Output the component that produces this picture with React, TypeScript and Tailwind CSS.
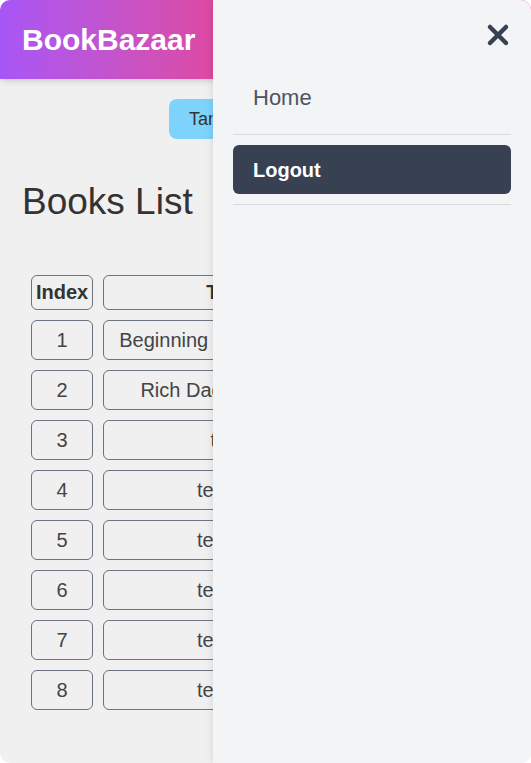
import { useState } from 'react';

interface Book {
  id: number;
  title: string;
}

const books: Book[] = [
  { id: 1, title: 'Beginning Programming' },
  { id: 2, title: 'Rich Dad Poor Dad' },
  { id: 3, title: 'test' },
  { id: 4, title: 'testing' },
  { id: 5, title: 'testing' },
  { id: 6, title: 'testing' },
  { id: 7, title: 'testing' },
  { id: 8, title: 'testing' },
];

function CloseIcon() {
  return (
    <svg width="24" height="24" viewBox="0 0 24 24" fill="none" className="text-[#374151]">
      <path d="M4 4L20 20M20 4L4 20" stroke="currentColor" strokeWidth="4.5" strokeLinecap="round" />
    </svg>
  );
}

export default function App() {
  const [open, setOpen] = useState(true);

  return (
    <div className="h-[763px] w-[531px] bg-white font-['Liberation_Sans',Arial,sans-serif]">
      <div className="relative h-full w-full overflow-hidden rounded-[10px] bg-[#f0f0f0]">
        <header className="flex h-[79px] items-center bg-linear-to-r from-[#a855f7] to-[#e0479f] to-[42%] px-[22px] shadow-md">
          <h1 className="text-[30px] font-bold text-white">BookBazaar</h1>
        </header>

        <main className="px-[22px]">
          <div className="flex justify-center pt-[20px]">
            <button
              type="button"
              className="h-[40px] rounded-lg bg-[#7dd3fc] px-5 text-[18px] text-[#333]"
            >
              Tambah Buku Baru
            </button>
          </div>

          <h2 className="mt-[41px] text-[37px] leading-[43px] text-[#333]">Books List</h2>

          <table className="mt-[42px] -ml-[1px] border-separate border-spacing-[10px] text-[20px] leading-[24px] text-[#444]">
            <thead>
              <tr>
                <th className="rounded-md border border-[#6b7280] px-1 py-[5px] leading-[23px] font-bold text-[#333]">Index</th>
                <th className="rounded-md border border-[#6b7280] px-[15px] py-[5px] leading-[23px] font-bold text-[#333]">Title</th>
                <th className="rounded-md border border-[#6b7280] px-[15px] py-[5px] leading-[23px] font-bold text-[#333]">Action</th>
              </tr>
            </thead>
            <tbody>
              {books.map((book) => (
                <tr key={book.id}>
                  <td className="rounded-md border border-[#6b7280] px-1 py-[7px] text-center">{book.id}</td>
                  <td className="rounded-md border border-[#6b7280] px-[15px] py-[7px] text-center whitespace-nowrap">
                    {book.title}
                  </td>
                  <td className="rounded-md border border-[#6b7280] px-[15px] py-[7px] text-center">Delete</td>
                </tr>
              ))}
            </tbody>
          </table>
        </main>

        {open && (
          <aside className="absolute top-0 right-0 bottom-0 flex w-[318px] flex-col bg-[#f3f4f6] px-5 shadow-[-2px_0_6px_rgba(0,0,0,0.08)]">
            <div className="flex justify-end pt-[23px] pr-[1px]">
              <button type="button" onClick={() => setOpen(false)} title="Close">
                <CloseIcon />
              </button>
            </div>
            <ul className="mt-[25px]">
              <li className="border-b border-[#d9dce1] pb-[12px]">
                <a href="#" className="flex h-[50px] items-center px-5 text-[22px] text-[#4b5563]">
                  Home
                </a>
              </li>
              <li className="border-b border-[#d9dce1] py-[10px]">
                <button
                  type="button"
                  className="flex h-[49px] w-full items-center rounded-md bg-[#374151] px-5 text-[20px] font-bold text-white"
                >
                  Logout
                </button>
              </li>
            </ul>
          </aside>
        )}
      </div>
    </div>
  );
}
